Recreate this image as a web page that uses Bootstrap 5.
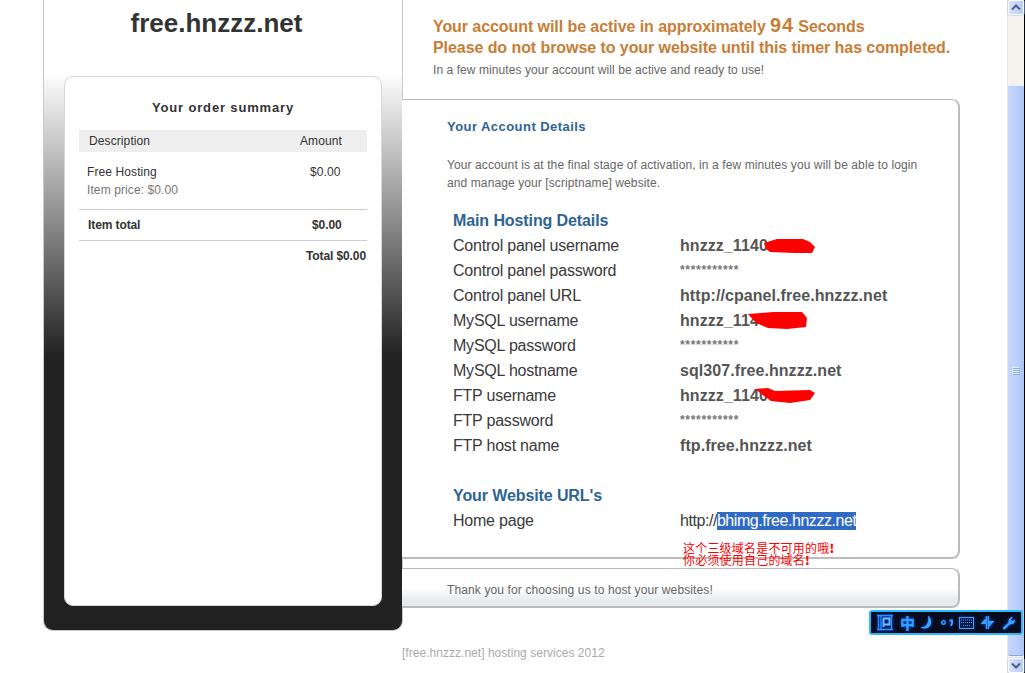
<!DOCTYPE html>
<html lang="en"><head><meta charset="utf-8"><title>free.hnzzz.net</title>
<link href="https://cdn.jsdelivr.net/npm/bootstrap@5.3.0/dist/css/bootstrap.min.css" rel="stylesheet">
<style>
html,body{margin:0;height:673px;overflow:hidden;background:#fff}
body{font-family:"Liberation Sans",Arial,sans-serif;font-size:12px;color:#333;position:relative}
.pg{height:673px}
.cnt{width:1007px;flex:none}
.side{width:360px;height:631px;margin-left:43px;flex:none;border:solid #c8c8c8;border-width:0 1px 1px;border-radius:0 0 10px 10px;background:linear-gradient(#fff 72px,#222 356px,#222);padding:0 20px}
.logo{font-size:26px;font-weight:700;color:#333;line-height:30px;margin:8px 0 38px -13px;text-align:center}
.sumcard{height:530px;width:318px;border:1px solid #d8d8d8;border-radius:9px;background:#fff;padding:23px 14px 0}
.sumt{font-size:13px;font-weight:700;letter-spacing:.85px;text-align:center;line-height:16px;margin:0 0 14px;color:#333}
.ot{width:288px;border-collapse:collapse;font-size:12px;letter-spacing:.1px}
.ot th{background:#eee;font-weight:400;height:22px;padding:0 0 0 10px}
.ot td{padding:0}
.amt{width:77px;text-align:left}
.muted{color:#777}
.itm{padding:8px 0 6px 8px!important;line-height:18px}
.itp{padding:11px 0 0 20px!important;vertical-align:top;line-height:18px;height:57px}
.ln td{border-top:1px solid #ccc;height:31px;font-weight:700;font-size:12px;letter-spacing:-.1px}
.ln .c1{padding-left:9px}
.ln .c2{padding-left:22px}
.ln .c3{padding-right:1px}
.main1{width:604px;flex:none;margin-left:-1px;position:relative}
.hd{padding:15px 0 0 31px;height:99px}
.cd1{font-size:16px;font-weight:700;color:#c87d36;line-height:21px;letter-spacing:-.07px}
.cd1 b{font-size:20px;letter-spacing:.8px}
.hsub{color:#666;line-height:21px;margin-top:2px;letter-spacing:.07px}
.dpan{width:558px;height:460px;border:solid #bbb;border-width:1px 2px 2px 0;border-radius:0 8px 8px 0;background:#fff;padding:19px 0 0 45px}
.dt{font-size:13px;font-weight:700;color:#2e6394;letter-spacing:.45px;line-height:16px;margin:0 0 21px}
.dp{color:#666;line-height:18px;margin:0 0 16px;letter-spacing:.1px;width:480px}
.sec{font-size:16px;font-weight:700;color:#2e6394;line-height:25px;margin-left:6px;letter-spacing:-.1px}
.sec2{margin-top:25px}
.rw{font-size:16px;line-height:25px;margin-left:6px;color:#3a3a3a;letter-spacing:-.22px}
.k{width:227px;flex:none}
.v{font-weight:700;color:#555;letter-spacing:.07px}
.st{font-size:12px;font-weight:700;color:#777;letter-spacing:.7px}
.lnk{letter-spacing:-.45px}
.sel{background:#316ac5;color:#fff;display:inline-block;line-height:18px}
.note{font-family:"Noto Sans CJK SC",sans-serif;color:#f00;font-size:12px;line-height:12px;margin:9px 0 -20px 236px;position:relative;z-index:2;letter-spacing:.2px}
.note b{font-weight:900}
.fpan{width:558px;height:40px;margin-top:9px;border:solid #bbb;border-width:1px 2px 2px 0;border-radius:0 8px 8px 0;background:linear-gradient(#fff 50%,#e8ebee 85%);padding:13px 0 0 45px;color:#666;line-height:16px;letter-spacing:.12px}
.cred{color:#aaa;margin-top:37px;line-height:16px;letter-spacing:.03px}
.red{position:absolute;left:0;top:0;z-index:3;pointer-events:none}
.ime{position:absolute;left:869px;top:610px;width:154px;height:25px;background:#070b1c;border:2px solid #2ab8ff;border-radius:3px;z-index:4;color:#2a8cff}
.ime svg,.ime .zh{filter:drop-shadow(0 0 1.500px #0a50ff)}
.ime .zh{font-family:"Noto Sans CJK SC",sans-serif;font-size:15px;font-weight:900;line-height:15px;color:#2aa0ff}
.sb{width:18px;flex:none;background:#f4f3ee;border-left:1px solid #e8e6dc;border-right:1px solid #000}
.sbtn{height:15px;width:16px;flex:none;background:linear-gradient(90deg,#d6e2fc,#b9cdf7);border:1px solid #fff;border-radius:2px;box-shadow:0 0 0 .5px #b4c6ea}
.thumb{height:573px;margin-top:70px;width:16px;background:linear-gradient(90deg,#c6d6fb,#bcd0fa 50%,#aec4f4);border-top:1px solid #e6edfd;border-bottom:1px solid #8ea6d8;border-radius:2px}
</style></head>
<body>
<div class="d-flex pg">
 <div class="cnt d-flex">
  <div class="side">
   <div class="logo">free.hnzzz.net</div>
   <div class="sumcard">
    <h6 class="sumt">Your order summary</h6>
    <table class="ot">
     <tr><th>Description</th><th class="amt">Amount</th></tr>
     <tr><td class="itm">Free Hosting<br><span class="muted">Item price: $0.00</span></td>
         <td class="itp">$0.00</td></tr>
     <tr class="ln"><td class="c1">Item total</td><td class="c2">$0.00</td></tr>
     <tr class="ln"><td colspan="2" class="text-end c3">Total $0.00</td></tr>
    </table>
   </div>
  </div>
  <div class="main1">
   <div class="hd">
    <div class="cd1">Your account will be active in approximately <b>94</b> Seconds<br>Please do not browse to your website until this timer has completed.</div>
    <div class="hsub">In a few minutes your account will be active and ready to use!</div>
   </div>
   <div class="dpan">
    <h6 class="dt">Your Account Details</h6>
    <p class="dp">Your account is at the final stage of activation, in a few minutes you will be able to login and manage your [scriptname] website.</p>
    <div class="sec">Main Hosting Details</div>
    <div class="rw d-flex"><div class="k">Control panel username</div><div class="v">hnzzz_1140</div></div>
    <div class="rw d-flex"><div class="k">Control panel password</div><div class="st">***********</div></div>
    <div class="rw d-flex"><div class="k">Control panel URL</div><div class="v">http://cpanel.free.hnzzz.net</div></div>
    <div class="rw d-flex"><div class="k">MySQL username</div><div class="v">hnzzz_114</div></div>
    <div class="rw d-flex"><div class="k">MySQL password</div><div class="st">***********</div></div>
    <div class="rw d-flex"><div class="k">MySQL hostname</div><div class="v">sql307.free.hnzzz.net</div></div>
    <div class="rw d-flex"><div class="k">FTP username</div><div class="v">hnzzz_1140</div></div>
    <div class="rw d-flex"><div class="k">FTP password</div><div class="st">***********</div></div>
    <div class="rw d-flex"><div class="k">FTP host name</div><div class="v">ftp.free.hnzzz.net</div></div>
    <div class="sec sec2">Your Website URL's</div>
    <div class="rw d-flex"><div class="k">Home page</div><div class="lnk">http://<span class="sel">bhimg.free.hnzzz.net</span></div></div>
    <div class="note">这个三级域名是不可用的哦<b>!</b><br>你必须使用自己的域名<b>!</b></div>
   </div>
   <div class="fpan">Thank you for choosing us to host your websites!</div>
   <div class="cred">[free.hnzzz.net] hosting services 2012</div>
  </div>
 </div>
 <div class="sb d-flex flex-column">
  <div class="sbtn d-flex align-items-center justify-content-center"><svg width="10" height="7" viewBox="0 0 10 7"><path d="M1 5.5 5 1.5l4 4" fill="none" stroke="#4d6185" stroke-width="2"/></svg></div>
  <div class="thumb d-flex align-items-center justify-content-center"><svg width="8" height="8" viewBox="0 0 8 8"><path d="M0 .5h7M0 2.5h7M0 4.500h7M0 6.500h7" stroke="#eef3fe"/><path d="M1 1.5h7M1 3.5h7M1 5.5h7M1 7.5h7" stroke="#8ea8de"/></svg></div>
  <div class="sbtn d-flex align-items-center justify-content-center" style="margin-top:2px"><svg width="10" height="7" viewBox="0 0 10 7"><path d="M1 1.5 5 5.5l4-4" fill="none" stroke="#4d6185" stroke-width="2"/></svg></div>
 </div>
</div>

<svg class="red" width="1025" height="673" viewBox="0 0 1025 673" aria-hidden="true">
 <path d="M764 243 777 239 803 239 810 242 815 247 812 253 795 253 770 252 766 249Z" fill="#f00"/>
 <path d="M748 314 773 312 802 312 807 318 806 327 787 329 768 328 756 323Z" fill="#f00"/>
 <path d="M755 389 768 388 775 391 810 390 815 393 810 400 790 403 771 401 764 396Z" fill="#f00"/>
</svg>

<div class="ime d-flex align-items-center" aria-label="input method toolbar">
 <svg style="margin-left:6px;flex:none" width="16" height="17" viewBox="0 0 16 17"><path d="M0 1.500h16M0 15.500h16M1.500 1v15M14.500 1v15M4 1v15" stroke="#2a90ff" fill="none" stroke-width="1.300"/><path d="M6 4.500h6.500v6H7.500M6.500 4.500V13" stroke="#6cc0ff" fill="none" stroke-width="1.800"/></svg>
 <span class="zh" style="margin-left:7px">中</span>
 <svg width="14" height="15" viewBox="0 0 14 15" style="margin-left:5px;flex:none"><path d="M8 .5c4 3 4.500 8.500 1 11.500-2.500 2-6.500 2-8.500 0 3.500.5 6-1 7-4C8.500 6 8.500 3 8 .5z" fill="#38a4ff"/></svg>
 <svg width="12" height="8" viewBox="0 0 12 8" style="margin-left:7px;flex:none"><circle cx="2.500" cy="3.500" r="1.800" fill="none" stroke="#38a4ff" stroke-width="1.300"/><path d="M8.500 1.500h2.500v2.800l-1 2.500" fill="none" stroke="#38a4ff" stroke-width="1.800"/></svg>
 <svg width="15" height="12" viewBox="0 0 15 12" style="margin-left:6px;flex:none"><rect x=".5" y=".5" width="14" height="11" fill="none" stroke="#38a4ff"/><path d="M2 3h11M2 5.500h11M4 8.500h8" stroke="#38a4ff" stroke-dasharray="1 1"/></svg>
 <svg width="15" height="15" viewBox="0 0 15 15" style="margin-left:6px;flex:none"><path d="M6.500 1v13M8.500 1v13" stroke="#38a4ff" stroke-width="1.400"/><path d="M5.800 3 .5 9h5.300zM9.200 12l5.300-6H9.200z" fill="#38a4ff"/></svg>
 <svg width="14" height="14" viewBox="0 0 14 14" style="margin-left:7px;flex:none"><path d="M.5 12 6.500 6.500C6 3.500 8 1 11 1L9 3.800l1.300 1.500L13 3.300C13.500 6.500 11 9 8 8.200L2.500 13.800Z" fill="#38a4ff"/></svg>
</div>
</body></html>
